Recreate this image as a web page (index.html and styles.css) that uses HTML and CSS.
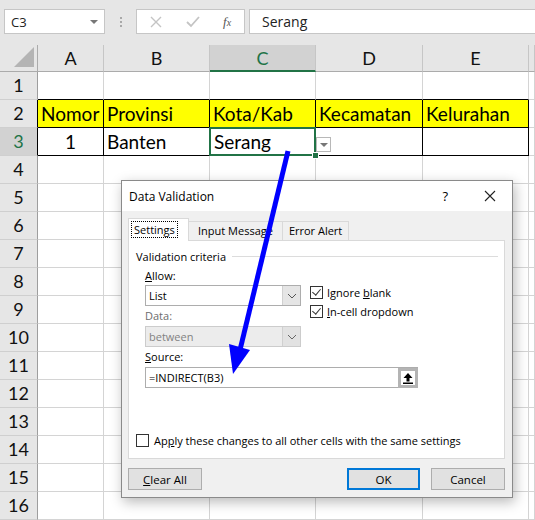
FILE: index.html
```html
<!DOCTYPE html>
<html lang="en">
<head>
    <meta charset="UTF-8">
    <title>Data Validation</title>
    <link rel="stylesheet" href="styles.css">
</head>
<body>

    <!-- Formula bar -->
    <div class="toolbar">
        <div class="name-box">
            <span>C3</span>
            <span class="nb-caret"></span>
        </div>
        <div class="grip"><i></i><i></i><i></i></div>
        <div class="fx-box">
            <svg width="12" height="12" viewBox="0 0 12 12"><path d="M1 1L11 11M11 1L1 11" stroke="#c4c4c4" stroke-width="1.4" fill="none"/></svg>
            <svg width="14" height="12" viewBox="0 0 14 12"><path d="M1 6L5 10L13 1" stroke="#c4c4c4" stroke-width="1.8" fill="none"/></svg>
            <span class="fx">f<sub>x</sub></span>
        </div>
        <div class="formula">Serang</div>
    </div>

    <!-- Sheet -->
    <div class="sheet">
        <div class="corner"><span></span></div>
        <div class="col-head">A</div>
        <div class="col-head">B</div>
        <div class="col-head active">C</div>
        <div class="col-head">D</div>
        <div class="col-head">E</div>
        <div class="col-head"></div>

        <div class="row-head">1</div>
        <div class="cell bb"></div><div class="cell bb"></div><div class="cell bb"></div><div class="cell bb"></div><div class="cell bb"></div><div class="cell"></div>

        <div class="row-head br">2</div>
        <div class="cell hd">Nomor</div>
        <div class="cell hd">Provinsi</div>
        <div class="cell hd">Kota/Kab</div>
        <div class="cell hd">Kecamatan</div>
        <div class="cell hd">Kelurahan</div>
        <div class="cell"></div>

        <div class="row-head br active">3</div>
        <div class="cell bd center">1</div>
        <div class="cell bd">Banten</div>
        <div class="cell bd selected">Serang<span class="handle"></span><span class="dd"></span></div>
        <div class="cell bd"></div>
        <div class="cell bd"></div>
        <div class="cell"></div>

        <div class="row-head">4</div><div class="cell"></div><div class="cell"></div><div class="cell"></div><div class="cell"></div><div class="cell"></div><div class="cell"></div>
        <div class="row-head">5</div><div class="cell"></div><div class="cell"></div><div class="cell"></div><div class="cell"></div><div class="cell"></div><div class="cell"></div>
        <div class="row-head">6</div><div class="cell"></div><div class="cell"></div><div class="cell"></div><div class="cell"></div><div class="cell"></div><div class="cell"></div>
        <div class="row-head">7</div><div class="cell"></div><div class="cell"></div><div class="cell"></div><div class="cell"></div><div class="cell"></div><div class="cell"></div>
        <div class="row-head">8</div><div class="cell"></div><div class="cell"></div><div class="cell"></div><div class="cell"></div><div class="cell"></div><div class="cell"></div>
        <div class="row-head">9</div><div class="cell"></div><div class="cell"></div><div class="cell"></div><div class="cell"></div><div class="cell"></div><div class="cell"></div>
        <div class="row-head">10</div><div class="cell"></div><div class="cell"></div><div class="cell"></div><div class="cell"></div><div class="cell"></div><div class="cell"></div>
        <div class="row-head">11</div><div class="cell"></div><div class="cell"></div><div class="cell"></div><div class="cell"></div><div class="cell"></div><div class="cell"></div>
        <div class="row-head">12</div><div class="cell"></div><div class="cell"></div><div class="cell"></div><div class="cell"></div><div class="cell"></div><div class="cell"></div>
        <div class="row-head">13</div><div class="cell"></div><div class="cell"></div><div class="cell"></div><div class="cell"></div><div class="cell"></div><div class="cell"></div>
        <div class="row-head">14</div><div class="cell"></div><div class="cell"></div><div class="cell"></div><div class="cell"></div><div class="cell"></div><div class="cell"></div>
        <div class="row-head">15</div><div class="cell"></div><div class="cell"></div><div class="cell"></div><div class="cell"></div><div class="cell"></div><div class="cell"></div>
        <div class="row-head">16</div><div class="cell"></div><div class="cell"></div><div class="cell"></div><div class="cell"></div><div class="cell"></div><div class="cell"></div>
    </div>

    <!-- Data Validation dialog -->
    <div class="dialog">
        <div class="dlg-title">
            <span>Data Validation</span>
            <span class="dlg-help">?</span>
            <svg class="dlg-close" width="12" height="12" viewBox="0 0 12 12"><path d="M1 1L11 11M11 1L1 11" stroke="#222" stroke-width="1.1" fill="none"/></svg>
        </div>
        <div class="dlg-body">
            <div class="tabs">
                <div class="tab current"><span class="focus">Settings</span></div>
                <div class="tab wide">Input Message</div>
                <div class="tab">Error Alert</div>
            </div>
            <div class="panel">
                <div class="group-title"><span>Validation criteria</span><i></i></div>
                <div class="criteria">
                    <div class="left-col">
                        <div class="label"><u>A</u>llow:</div>
                        <div class="combo">
                            <span>List</span>
                            <span class="combo-btn"><svg width="10" height="6" viewBox="0 0 10 6"><path d="M1 1L5 5L9 1" stroke="#555" fill="none"/></svg></span>
                        </div>
                        <div class="label muted">Data:</div>
                        <div class="combo disabled">
                            <span>between</span>
                            <span class="combo-btn"><svg width="10" height="6" viewBox="0 0 10 6"><path d="M1 1L5 5L9 1" stroke="#666" fill="none"/></svg></span>
                        </div>
                    </div>
                    <div class="checks">
                        <label class="check"><span class="box on"></span><span>Ignore <u>b</u>lank</span></label>
                        <label class="check"><span class="box on"></span><span><u>I</u>n-cell dropdown</span></label>
                    </div>
                </div>
                <div class="label"><u>S</u>ource:</div>
                <div class="source">
                    <span>=INDIRECT(B3)</span>
                    <span class="ref-btn"><svg width="12" height="12" viewBox="0 0 12 12"><path d="M6 1L10.5 6H7.5V9.5H4.5V6H1.5Z" fill="#000"/><rect x="1" y="10.5" width="10" height="1.5" fill="#000"/></svg></span>
                </div>
                <label class="check apply"><span class="box"></span><span>Ap<u>p</u>ly these changes to all other cells with the same settings</span></label>
            </div>
            <div class="buttons">
                <button class="btn"><u>C</u>lear All</button>
                <div class="spacer"></div>
                <button class="btn primary">OK</button>
                <button class="btn">Cancel</button>
            </div>
        </div>
    </div>

    <!-- Blue annotation arrow -->
    <svg class="arrow" width="535" height="520" viewBox="0 0 535 520">
        <line x1="288" y1="151" x2="240" y2="350" stroke="#0000ff" stroke-width="5"/>
        <polygon points="233,374 229,344 250,350" fill="#0000ff"/>
    </svg>

</body>
</html>
```

FILE: styles.css
```css
/* Excel sheet + Data Validation dialog */
body {
    margin: 0;
    width: 535px;
    height: 520px;
    overflow: hidden;
    position: relative;
    background: #fff;
    font-family: 'Lato', 'Noto Sans', sans-serif;
}

/* Formula bar */
.toolbar {
    height: 45px;
    background: #e6e6e6;
    display: flex;
    align-items: flex-start;
    padding-top: 9px;
    box-sizing: border-box;
}

.name-box {
    margin-left: 4px;
    width: 101px;
    height: 25px;
    box-sizing: border-box;
    background: #fff;
    border: 1px solid #c6c6c6;
    display: flex;
    align-items: center;
    justify-content: space-between;
    padding: 0 6px 0 6px;
    font-family: 'Open Sans', sans-serif;
    font-size: 13px;
    color: #222;
}

.nb-caret {
    width: 0;
    height: 0;
    border-left: 4px solid transparent;
    border-right: 4px solid transparent;
    border-top: 4px solid #777;
}

.grip {
    width: 31px;
    height: 25px;
    display: flex;
    flex-direction: column;
    align-items: center;
    justify-content: center;
    gap: 2px;
}

.grip i {
    width: 2px;
    height: 2px;
    background: #a8a8a8;
}

.fx-box {
    width: 109px;
    height: 25px;
    box-sizing: border-box;
    background: #fff;
    border: 1px solid #c6c6c6;
    display: flex;
    align-items: center;
    padding-left: 13px;
    gap: 24px;
}

.fx {
    font-family: 'Liberation Serif', serif;
    font-style: italic;
    font-size: 13px;
    color: #555;
    margin-left: -1px;
}

.fx sub {
    font-size: 10px;
    vertical-align: 0;
}

.formula {
    margin-left: 4px;
    flex: 1;
    height: 25px;
    box-sizing: border-box;
    background: #fff;
    border: 1px solid #c6c6c6;
    border-right: none;
    padding-left: 12px;
    font-family: 'Open Sans', sans-serif;
    font-size: 14px;
    line-height: 23px;
    color: #222;
}

/* Grid */
.sheet {
    display: grid;
    grid-template-columns: 38px 66px 106px 106px 107px 106px 6px;
    grid-template-rows: 27px repeat(16, 28px);
}

.corner {
    background: #e6e6e6;
    border-right: 1px solid #ababab;
    border-bottom: 1px solid #ababab;
    position: relative;
}

.corner span {
    position: absolute;
    right: 3px;
    bottom: 4px;
    width: 0;
    height: 0;
    border-left: 20px solid transparent;
    border-bottom: 20px solid #b4b4b4;
}

.col-head {
    background: #e6e6e6;
    border-right: 1px solid #c6c6c6;
    border-bottom: 1px solid #ababab;
    font-size: 18px;
    line-height: 27px;
    text-align: center;
    color: #111;
    box-sizing: border-box;
}

.col-head.active {
    background: #d2d2d2;
    color: #217346;
    border-bottom: 2px solid #217346;
}

.row-head {
    background: #e6e6e6;
    border-right: 1px solid #9e9e9e;
    border-bottom: 1px solid #cfcfcf;
    font-size: 18px;
    line-height: 27px;
    text-align: center;
    color: #111;
    box-sizing: border-box;
}

.row-head.br {
    border-right-color: #000;
}

.row-head.active {
    background: #d2d2d2;
    color: #217346;
}

.cell {
    border-right: 1px solid #d4d4d4;
    border-bottom: 1px solid #d4d4d4;
    box-sizing: border-box;
    font-size: 19px;
    line-height: 27px;
    padding-left: 3px;
    color: #000;
    white-space: nowrap;
    position: relative;
}

.cell.bb {
    border-bottom-color: #000;
}

.cell.hd {
    background: #ffff00;
    border-color: #000;
}

.cell.bd {
    border-color: #000;
}

.cell.center {
    text-align: center;
    padding-left: 0;
}

.cell.selected {
    box-shadow: inset 0 0 0 2px #217346;
    border: none;
    margin: -1px 0 0 -1px;
    padding-left: 5px;
    line-height: 29px;
    z-index: 2;
}

.handle {
    position: absolute;
    right: -3px;
    bottom: -3px;
    width: 5px;
    height: 5px;
    background: #217346;
    border: 1px solid #fff;
}

.dd {
    position: absolute;
    left: 107px;
    top: 10px;
    width: 15px;
    height: 15px;
    box-sizing: border-box;
    border: 1px solid #b8b8b8;
    background: #fff;
}

.dd::after {
    content: '';
    position: absolute;
    left: 3px;
    top: 5px;
    border-left: 4px solid transparent;
    border-right: 4px solid transparent;
    border-top: 4px solid #777;
}

/* Dialog */
.dialog {
    position: absolute;
    left: 121px;
    top: 180px;
    width: 392px;
    height: 318px;
    box-sizing: border-box;
    border: 1px solid #8a8a8a;
    background: #f0f0f0;
    box-shadow: 2px 4px 12px rgba(0, 0, 0, 0.28);
    font-family: 'Open Sans', 'Noto Sans', sans-serif;
    font-size: 11px;
    color: #000;
    display: flex;
    flex-direction: column;
    z-index: 5;
}

.dlg-title {
    height: 30px;
    background: #fff;
    display: flex;
    align-items: center;
    padding-left: 7px;
    font-size: 12px;
}

.dlg-help {
    margin-left: auto;
    font-size: 13px;
    margin-right: 36px;
}

.dlg-close {
    margin-right: 16px;
}

.dlg-body {
    flex: 1;
    padding: 7px 7px 0 6px;
    display: flex;
    flex-direction: column;
}

.tabs {
    display: flex;
    height: 22px;
    align-items: flex-end;
}

.tab {
    height: 19px;
    box-sizing: border-box;
    border: 1px solid #d9d9d9;
    border-bottom: none;
    padding: 0 6px;
    line-height: 18px;
    margin-left: -1px;
    background: #f0f0f0;
}

.tab.wide {
    padding: 0 9px;
}

.tab.current {
    height: 23px;
    background: #fff;
    margin-left: 0;
    padding: 3px 3px 0 3px;
    line-height: 16px;
    position: relative;
    z-index: 1;
    margin-bottom: -1px;
    width: 61px;
}

.focus {
    outline: 1px dotted #000;
    padding: 0 2px;
}

.panel {
    height: 219px;
    box-sizing: border-box;
    background: #fff;
    border: 1px solid #d9d9d9;
    padding: 7px 6px 0 7px;
    display: flex;
    flex-direction: column;
}

.group-title {
    display: flex;
    align-items: center;
    gap: 6px;
    height: 16px;
}

.group-title i {
    flex: 1;
    height: 1px;
    background: #dcdcdc;
}

.criteria {
    display: flex;
    padding-left: 9px;
    margin-top: 2px;
}

.left-col {
    width: 156px;
}

.label {
    height: 20px;
    line-height: 19px;
    padding-left: 9px;
}

.left-col .label:first-child {
    height: 19px;
    line-height: 20px;
}

.left-col .label {
    padding-left: 0;
}

.label.muted {
    color: #6d6d6d;
}

.combo {
    height: 21px;
    box-sizing: border-box;
    border: 1px solid #adadad;
    display: flex;
    align-items: center;
    padding-left: 3px;
}

.combo span:first-child {
    flex: 1;
}

.combo-btn {
    width: 17px;
    height: 19px;
    background: #e5e5e5;
    display: flex;
    align-items: center;
    justify-content: center;
    border-left: 1px solid #d0d0d0;
}

.combo.disabled {
    background: #ececec;
    border-color: #cccccc;
    color: #838383;
}

.combo.disabled .combo-btn {
    background: #e2e2e2;
}

.checks {
    margin-left: 9px;
    padding-top: 20px;
    display: flex;
    flex-direction: column;
    gap: 6px;
}

.check {
    display: flex;
    align-items: center;
    gap: 4px;
    height: 13px;
    white-space: nowrap;
}

.box {
    width: 13px;
    height: 13px;
    flex: none;
    box-sizing: border-box;
    border: 1px solid #333;
    background: #fff;
    position: relative;
}

.box.on::after {
    content: '';
    position: absolute;
    left: 3px;
    top: 0px;
    width: 4px;
    height: 7px;
    border-right: 1px solid #333;
    border-bottom: 1px solid #333;
    transform: rotate(40deg);
}

.source {
    margin-left: 9px;
    width: 273px;
    height: 21px;
    box-sizing: border-box;
    border: 1px solid #adadad;
    display: flex;
    align-items: center;
    padding-left: 3px;
}

.source span:first-child {
    flex: 1;
}

.ref-btn {
    width: 20px;
    height: 20px;
    box-sizing: border-box;
    border: 3px solid #b4b4b4;
    display: flex;
    align-items: center;
    justify-content: center;
    margin-right: -1px;
}

.check.apply {
    margin-top: auto;
    margin-bottom: 11px;
    gap: 5px;
}

.buttons {
    display: flex;
    gap: 11px;
    margin-top: 9px;
}

.spacer {
    flex: 1;
}

.btn {
    width: 74px;
    height: 22px;
    box-sizing: border-box;
    border: 1px solid #adadad;
    background: #e1e1e1;
    font-family: inherit;
    font-size: 11.5px;
    padding: 0;
    color: #000;
}

.btn.primary {
    border: 2px solid #0078d7;
    width: 73px;
}

/* Annotation arrow */
.arrow {
    position: absolute;
    left: 0;
    top: 0;
    z-index: 10;
    pointer-events: none;
}
```
